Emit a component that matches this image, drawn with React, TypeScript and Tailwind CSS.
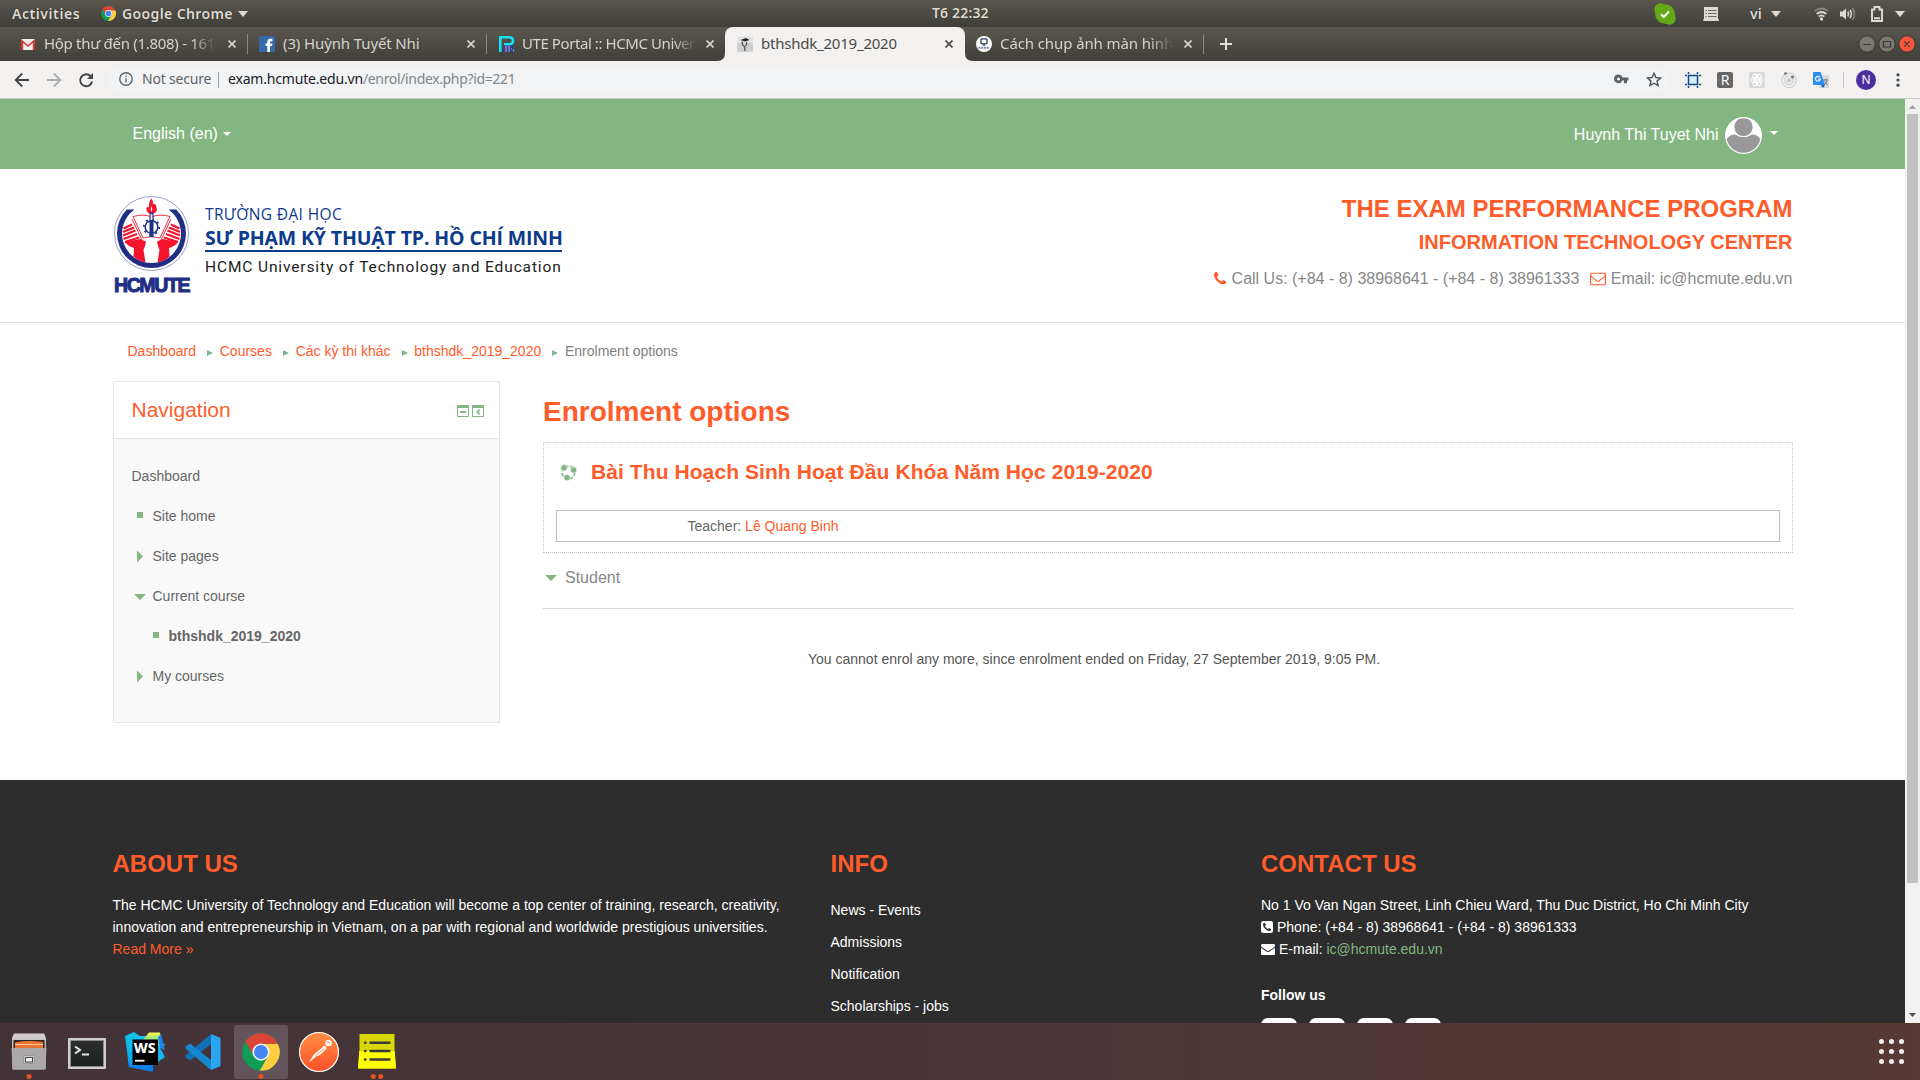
import React from "react";

type P = { children?: React.ReactNode; className?: string };

const PHONE =
  "M1408 1240q0 27-10 70.5t-21 68.5q-21 50-122 106-94 51-186 51-27 0-52.5-3.5t-57.5-12.5-47.5-14.5-55.5-20.5-49-18q-98-35-175-83-128-79-264.5-215.5t-215.5-264.5q-48-77-83-175-3-9-18-49t-20.5-55.5-14.5-47.5-12.5-57.5-3.5-52.5q0-92 51-186 56-101 106-122 25-11 68.5-21t70.5-10q14 0 21 3 18 6 53 76 11 19 30 54t35 63.5 31 53.5q3 4 17.5 25t21.5 35.5 7 28.5q0 20-28.5 50t-62 55-62 53-28.5 46q0 9 5 22.5t8.5 20.5 14 24 11.5 19q76 137 174 235t235 174q2 1 19 11.5t24 14 20.5 8.5 22.5 5q18 0 46-28.5t53-62 55-62 50-28.5q14 0 28.5 7t35.5 21.5 25 17.5q25 15 53.5 31t63.5 35 54 30q70 35 76 53 3 7 3 21z";
const ENVELOPE_O =
  "M1664 1504v-768q-32 36-69 66-268 206-426 338-51 43-83 67t-86.5 48.5-102.5 24.5h-2q-48 0-102.5-24.5t-86.5-48.5-83-67q-158-132-426-338-37-30-69-66v768q0 13 9.5 22.5t22.5 9.5h1472q13 0 22.5-9.5t9.5-22.5zm0-1051v-24.5l-.5-13-3-12.5-5.5-9-9-7.5-14-2.5h-1472q-13 0-22.5 9.5t-9.5 22.5q0 168 147 284 193 152 401 317 6 5 35 29.5t46 37.5 44.5 31.5 50.5 27.5 43 9h2q20 0 43-9t50.5-27.5 44.5-31.5 46-37.5 35-29.5q208-165 401-317 54-43 100.5-115.5t46.5-131.5zm128-37v1088q0 66-47 113t-113 47h-1472q-66 0-113-47t-47-113v-1088q0-66 47-113t113-47h1472q66 0 113 47t47 113z";
const ENVELOPE =
  "M1792 710v794q0 66-47 113t-113 47h-1472q-66 0-113-47t-47-113v-794q44 49 101 87 362 246 497 345 57 42 92.5 65.5t94.5 48 110 24.5h2q51 0 110-24.5t94.5-48 92.5-65.5q170-123 498-345 57-39 100-87zm0-294q0 79-49 151t-122 123q-376 261-468 325-10 7-42.5 30.5t-54 38-52 32.5-57.5 27-50 9h-2q-23 0-50-9t-57.5-27-52-32.5-54-38-42.5-30.5q-91-64-262-182.5t-205-142.5q-62-42-117-115.5t-55-136.5q0-78 41.5-130t118.5-52h1472q65 0 112.5 47t47.5 113z";

function Chrome({ className }: P) {
  return (
    <svg viewBox="-50 -50 100 100" className={className}>
      <circle r="50" fill="#109d58" />
      <path d="M0-22H44.9A50 50 0 0 1-3.4 49.9L19 11Z" fill="#ffcd40" />
      <path d="M0 0V-22H44.9A50 50 0 0 0-41.5-27.9L-19 11Z" fill="#db4437" />
      <circle r="23" fill="#f1f1f1" />
      <circle r="18.5" fill="#4285f4" />
    </svg>
  );
}

function Caret({ className }: P) {
  return (
    <svg viewBox="0 0 10 6" className={className} fill="currentColor" preserveAspectRatio="none">
      <path d="M0 0H10L5 6Z" />
    </svg>
  );
}

function TopBar() {
  return (
    <div className="flex h-[27px] items-center bg-linear-to-b from-[#5a564e] to-[#3f3e39] text-[#dfdbd2] text-[14px] font-semibold leading-[26px] [text-shadow:0_0_1px_#222]">
      <div className="flex w-[932px] items-center pl-3">
        <span className="w-[89px] tracking-[0.57px]">Activities</span>
        <Chrome className="h-[15px] w-[15px]" />
        <span className="ml-[6px] w-[116px] whitespace-nowrap tracking-[0.38px]">Google Chrome</span>
        <Caret className="h-[6px] w-[10px]" />
      </div>
      <span className="-mt-px w-[722px] tracking-[0.15px]">T6 22:32</span>
      <svg className="h-[22px] w-[22px]" viewBox="0 0 22 22">
        <circle cx="11" cy="11" r="9.8" fill="#62a915" />
        <circle cx="6.5" cy="6.5" r="6.2" fill="#62a915" />
        <circle cx="15.5" cy="15.5" r="6.2" fill="#62a915" />
        <path d="M7 11.3l2.8 2.7 5.2-5.6" fill="none" stroke="#fff" strokeWidth="2" />
      </svg>
      <svg className="ml-[27px] h-[14px] w-[16px]" viewBox="0 0 16 14">
        <path d="M1 0H15V11L16 14H0L1 11Z" fill="#dfdbd2" />
        <path d="M2.5 3.5h1.3M5 3.5h8.5M2.5 6.5h1.3M5 6.5h8.5M2.5 9.5h1.3M5 9.5h8.5" stroke="#6b6963" strokeWidth="1" />
      </svg>
      <span className="ml-[31px] w-[21px]">vi</span>
      <Caret className="h-[6px] w-[10px]" />
      <svg className="ml-[33px] h-[14px] w-[15px]" viewBox="0 0 15 14" fill="none" stroke="#dfdbd2" strokeWidth="1.7">
        <path d="M.8 4.2Q7.500-1.200 14.200 4.200" opacity=".4" />
        <path d="M2.700 7Q7.500 3 12.300 7" />
        <path d="M4.700 9.700Q7.500 7.200 10.300 9.700" />
        <circle cx="7.500" cy="12" r="1.700" fill="#dfdbd2" stroke="none" />
      </svg>
      <svg className="ml-[11px] h-[14px] w-[16px]" viewBox="0 0 16 14" fill="none" stroke="#dfdbd2" strokeWidth="1.5">
        <path d="M0 4.500H2.500L6 1.500V12.500L2.500 9.500H0Z" fill="#dfdbd2" stroke="none" />
        <path d="M7.800 4.500Q9.300 7 7.800 9.500M10 2.800Q12.700 7 10 11.200" />
        <path d="M12.400 1Q16.400 7 12.400 13" opacity=".4" />
      </svg>
      <svg className="ml-[15px] h-[16px] w-[12px]" viewBox="0 0 12 16" fill="none" stroke="#dfdbd2" strokeWidth="1.900">
        <path d="M1 3.500H3.500V1H8.500V3.500H11V15H1Z" />
        <path d="M3 12.300H9" strokeWidth="2" />
      </svg>
      <Caret className="ml-[12px] h-[6px] w-[10px]" />
    </div>
  );
}

function Close({ className }: P) {
  return (
    <svg viewBox="0 0 8 8" className={"h-2 w-2 shrink-0 " + (className ?? "")} stroke="currentColor" strokeWidth="1.7">
      <path d="M.5.5l7 7M7.500.5l-7 7" />
    </svg>
  );
}

const fade = "-mt-[2px] overflow-hidden whitespace-nowrap [mask-image:linear-gradient(90deg,#000_calc(100%-24px),transparent)]";

function TabBar() {
  return (
    <div className="flex h-[34px] items-center bg-linear-to-b from-[#5b574f] to-[#403f3a] text-[15px] leading-[34px] text-[#d6d3cb]">
      <div className="flex w-[248px] items-center pl-[21px]">
        <svg className="mt-[1px] h-[11px] w-[14px]" viewBox="0 0 14 11">
          <rect width="14" height="11" rx="1" fill="#eee" />
          <path d="M0 11V0L7 6 14 0V11H11.800V4L7 8 2.200 4V11Z" fill="#d93a34" />
        </svg>
        <span className={"ml-[9px] w-[172px] tracking-[-0.3px] " + fade}>Hộp thư đến (1.808) - 161</span>
        <Close className="ml-3" />
        <i className="ml-[10.500px] h-5 w-px bg-[#8b8881]" />
      </div>
      <div className="flex w-[239px] items-center pl-[11px]">
        <svg className="h-4 w-4" viewBox="0 0 16 16">
          <rect width="16" height="16" rx="1" fill="#3568ad" />
          <path d="M8.300 16V10H6.600V7.500H8.300V6Q8.300 2.800 11.300 2.800H13.400V5.200H12Q11 5.200 11 6.200V7.500H13.400L13.100 10H11V16Z" fill="#fff" />
        </svg>
        <span className="-mt-[2px] ml-[8px] w-[184px] whitespace-nowrap tracking-[-0.12px]">(3) Huỳnh Tuyết Nhi</span>
        <Close />
        <i className="ml-[11px] h-5 w-px bg-[#8b8881]" />
      </div>
      <div className="flex w-[238px] items-center pl-[12px]">
        <svg className="h-4 w-4" viewBox="0 0 16 16" fill="none">
          <path d="M1.300 16V1.300H10Q14 1.300 14 4.800T10 8.200H5M8 8.500L14.500 15.500" stroke="#13e4f5" strokeWidth="2.600" />
          <rect x="4.500" y="9.500" width="9.500" height="6.500" fill="#3b3d92" />
          <path d="M6 11h6M6 13h7M6 15h6" stroke="#c8c9ee" strokeWidth=".8" strokeDasharray="2 1" />
        </svg>
        <span className={"ml-[7px] w-[175px] tracking-[-0.42px] " + fade}>UTE Portal :: HCMC Univer</span>
        <Close className="ml-[9px]" />
      </div>
      <div className="relative flex h-full w-[240px] items-center rounded-t-[8px] bg-[#f2f1f0] pl-[12px] text-[#4c4a46]">
        <svg className="absolute bottom-0 -left-2 h-2 w-2" viewBox="0 0 8 8"><path d="M8 0V8H0Q8 8 8 0Z" fill="#f2f1f0" /></svg>
        <svg className="absolute bottom-0 -right-2 h-2 w-2" viewBox="0 0 8 8"><path d="M0 0V8H8Q0 8 0 0Z" fill="#f2f1f0" /></svg>
        <svg className="h-4 w-4" viewBox="0 0 16 16">
          <rect width="16" height="16" rx="1" fill="#cfcfcf" />
          <rect width="16" height="7" fill="#e4e4e4" />
          <path d="M3.500 4L9 2 12.500 4 8 5.500Z" fill="#222" />
          <path d="M5.500 5.500Q4.500 9 7.500 10.500L8 15M9.500 6Q10.500 8 8.500 10" fill="none" stroke="#555" strokeWidth="1.300" />
        </svg>
        <span className="-mt-[2px] ml-[8px] w-[184px] tracking-[-0.22px]">bthshdk_2019_2020</span>
        <Close />
      </div>
      <div className="flex w-[239px] items-center pl-[11px]">
        <svg className="h-4 w-4" viewBox="0 0 16 16">
          <circle cx="8" cy="8" r="8" fill="#fff" />
          <rect x="5" y="2.800" width="6" height="5" rx=".8" fill="none" stroke="#2c3a58" strokeWidth="1.300" />
          <path d="M7 9h2" stroke="#2c3a58" strokeWidth="1.500" />
          <path d="M2.500 11.800h11" stroke="#7c86b0" strokeWidth="2" strokeDasharray="2 .7" />
        </svg>
        <span className={"ml-[8px] w-[173px] tracking-[-0.1px] " + fade}>Cách chụp ảnh màn hình</span>
        <Close className="ml-[11px]" />
        <i className="ml-[11px] h-5 w-px bg-[#8b8881]" />
      </div>
      <svg className="ml-[16px] h-3 w-3" viewBox="0 0 12 12" stroke="#e2dfd8" strokeWidth="2"><path d="M6 0V12M0 6H12" /></svg>
      <svg className="ml-auto mr-[3px] h-[20px] w-[60px]" viewBox="0 0 60 20" fill="none">
        <g stroke="#35342f" strokeWidth="1">
          <circle cx="10" cy="10" r="8.200" fill="#7a7871" />
          <circle cx="30" cy="10" r="8.200" fill="#7a7871" />
          <circle cx="50" cy="10" r="8.200" fill="#f4573c" />
        </g>
        <path d="M6 10.500h8M26.500 7.500h7v5.500h-7zM47.300 7.300l5.400 5.400M52.700 7.300l-5.400 5.400" stroke="#3a3934" strokeWidth="1.200" />
      </svg>
    </div>
  );
}

function Toolbar() {
  return (
    <div className="flex h-[38px] items-center border-b border-[#c8c8c8] bg-[#f2f1f0] text-[14px]">
      <svg className="ml-[14px] h-[16px] w-[80px]" viewBox="0 0 80 16" fill="none" strokeWidth="1.900">
        <path d="M15 8H2M8.200 1.500L1.700 8l6.500 6.500" stroke="#454545" />
        <path d="M33 8H46M39.800 1.500L46.300 8l-6.500 6.500" stroke="#adadad" />
        <path d="M76.500 4A6 6 0 1 0 78.100 9.500" stroke="#454545" />
        <path d="M79 1V7H73Z" fill="#454545" />
      </svg>
      <div className="ml-[14px] flex h-[28px] w-[1563px] items-center rounded-full bg-[#f1f3f5] leading-[26px] text-[#5f6368]">
        <svg className="-mt-px ml-[11px] h-[14px] w-[14px]" viewBox="0 0 14 14" fill="none" stroke="#5f6368" strokeWidth="1.400">
          <circle cx="7" cy="7" r="6.200" /><path d="M7 6.300V10.300M7 3.500V5" />
        </svg>
        <span className="-mt-[2px] ml-[9px] w-[76px] whitespace-nowrap tracking-[-0.2px]">Not secure</span>
        <i className="h-4 w-px bg-[#999]" />
        <span className="-mt-[2px] ml-[9px] whitespace-nowrap tracking-[-0.35px] text-[#80868b]"><span className="tracking-[-0.18px] text-[#202124]">exam.hcmute.edu.vn</span>/enrol/index.php?id=221</span>
        <svg className="-mt-[2px] ml-auto h-[10px] w-[15px]" viewBox="0 0 15 10">
          <path d="M4.500.5A4.300 4.300 0 1 0 8.300 6.500H10V9.300H13V6.500H14.500V3.500H8.500A4.300 4.300 0 0 0 4.500.5ZM4.500 3.400A1.500 1.500 0 1 1 4.490 3.400Z" fill="#5f6368" fillRule="evenodd" />
        </svg>
        <svg className="-mt-px ml-[16.500px] mr-[9.500px] h-[15px] w-[16px]" viewBox="0 0 16 15" fill="none" stroke="#4f5357" strokeWidth="1.400">
          <path d="M8 1.300L9.900 5.500 14.600 6 11 9.100 12.100 13.600 8 11.200 3.900 13.600 5 9.100 1.400 6 6.100 5.500Z" />
        </svg>
      </div>
      <svg className="ml-[14px] h-[16px] w-[16px]" viewBox="0 0 16 16" fill="#d8ebf8" stroke="#174a85">
        <rect x="4" y="4" width="8" height="8" stroke="none" />
        <path d="M3.500 3.500H12.500V12.500H3.500Z" fill="none" strokeWidth="1.500" />
        <path d="M3.500 0V2M12.500 0V2M3.500 14V16M12.500 14V16M0 3.500H2M0 12.500H2M14 3.500H16M14 12.500H16" strokeWidth="1.500" />
      </svg>
      <div className="ml-[16px] flex h-4 w-4 items-center justify-center rounded-[2px] bg-[#666] text-[14px] leading-4 text-white">R</div>
      <svg className="ml-[16px] h-4 w-4" viewBox="0 0 16 16" fill="none" stroke="#fff" strokeWidth="1">
        <rect width="16" height="16" rx="1" fill="#d9d9d9" stroke="none" />
        <ellipse cx="8" cy="8" rx="6.500" ry="2.600" /><ellipse cx="8" cy="8" rx="6.500" ry="2.600" transform="rotate(60 8 8)" /><ellipse cx="8" cy="8" rx="6.500" ry="2.600" transform="rotate(120 8 8)" />
        <circle cx="8" cy="8" r="1.200" fill="#fff" />
      </svg>
      <svg className="ml-[16px] h-4 w-4" viewBox="0 0 16 16" fill="none" stroke="#d0d0d0" strokeWidth="1.200">
        <circle cx="8" cy="8.300" r="7.200" /><circle cx="8" cy="8.300" r="4.300" /><circle cx="8" cy="8.300" r="1.800" fill="#ccc" />
        <circle cx="4.500" cy="1.600" r="1.500" fill="#888" stroke="none" /><circle cx="11.500" cy="5" r="1.600" fill="#777" stroke="none" />
      </svg>
      <svg className="ml-[16px] h-4 w-4" viewBox="0 0 16 16">
        <rect x="6" y="3" width="10" height="13" rx="1" fill="#d8d8d8" />
        <path d="M8 13H12L10 16Z" fill="#1a5fc0" />
        <path d="M1 0H7.500L12 13H1Q0 13 0 12V1Q0 0 1 0Z" fill="#2a8df2" />
        <path d="M6.800 5.300A2.400 2.400 0 1 0 7.300 7H5" fill="none" stroke="#fff" strokeWidth="1.100" />
        <path d="M10.300 8H15M12.600 6.800V8M14 8.500Q13.500 11 11.500 12.500M11.500 9.500L14.500 13" fill="none" stroke="#6b7680" strokeWidth="1" />
      </svg>
      <i className="ml-[14px] h-4 w-px bg-[#c5c5c5]" />
      <div className="ml-[12px] flex h-5 w-5 items-center justify-center rounded-full bg-[#4a2ea0] text-[12px] leading-5 text-white">N</div>
      <svg className="ml-[20px] h-[14px] w-[4px]" viewBox="0 0 4 14" fill="#454545"><circle cx="2" cy="1.800" r="1.600" /><circle cx="2" cy="7" r="1.600" /><circle cx="2" cy="12.200" r="1.600" /></svg>
    </div>
  );
}

function Emblem() {
  return (
    <svg className="h-[75px] w-[75px]" viewBox="0 0 75 75">
      <circle cx="37.500" cy="37.500" r="37" fill="#fff" stroke="#7d85bd" strokeWidth=".8" />
      <path d="M12.700 13.500A34.500 34.500 0 1 0 62.300 13.500H54.500A29.500 29.500 0 1 1 20.500 13.500Z" fill="#1f2f86" />
      <path d="M37.500 2.500Q40 6 38.500 8Q42 7 42.500 12Q44 15 40 17.500H35.500Q31 15 33 10.500Q34 12 35 11Q34.500 6 37.500 2.500Z" fill="#f5142e" />
      <path d="M37.500 10Q39 13 37.500 16Q36 13 37.500 10Z" fill="#fff" />
      <path d="M37.500 21Q30 17.500 19 20.500L29 42Q37.500 39 46 42L56 20.500Q45 17.500 37.500 21ZM18 23L28 44M57 23L47 44" fill="none" stroke="#f5142e" strokeWidth=".9" />
      <circle cx="37.500" cy="31" r="6.300" fill="none" stroke="#1f2f86" strokeWidth="1.500" />
      <circle cx="37.500" cy="31" r="7.700" fill="none" stroke="#1f2f86" strokeWidth="1.800" strokeDasharray="2 4.050" />
      <path d="M35.500 16.500H39.500V41H35.500Z" fill="#1f2f86" />
      <path d="M36.600 18H38.400V24H36.600Z" fill="#dfe3f5" />
      <path d="M9.500 32.500L18 28.500M9 36L20 31.500M9 39.500L21.500 34.500M9.500 43L23 38M11 46L25 41.500M65.500 32.500L57 28.500M66 36L55 31.500M66 39.500L53.500 34.500M65.500 43L52 38M64 46L50 41.500" stroke="#f5142e" strokeWidth="2.300" />
      <path d="M11 46L26 43L32 45.500L31 50L29.500 54L31.500 66.500Q24 65 19.500 60.500L20 52Q14 50.500 11 46Z" fill="#f5142e" />
      <path d="M64 46L49 43L43 45.500L44 50L45.500 54L43.500 66.500Q51 65 55.500 60.500L55 52Q61 50.500 64 46Z" fill="#f5142e" />
    </svg>
  );
}

function SiteHeader() {
  return (
    <>
      <div className="flex h-[70px] items-center bg-[#84b682] pl-[132.500px] pr-[127px] text-[16px] leading-[24px] text-white">
        <span className="mr-[5px]">English (en)</span>
        <Caret className="h-[4px] w-[8px]" />
        <span className="mt-px ml-auto mr-[6.500px]">Huynh Thi Tuyet Nhi</span>
        <svg className="mt-[2px] h-[37px] w-[37px]" viewBox="0 0 37 37">
          <defs><clipPath id="av"><circle cx="18.500" cy="18.500" r="17.300" /></clipPath></defs>
          <circle cx="18.500" cy="18.500" r="18.500" fill="#fff" />
          <g clipPath="url(#av)" fill="#999">
            <path d="M1 24Q3.500 17 10 17.500Q18.500 22.500 27 17.500Q33.500 17 36 24V37H1Z" />
            <circle cx="18.500" cy="10" r="9.700" stroke="#fff" strokeWidth="1" />
          </g>
        </svg>
        <Caret className="-mt-[3px] ml-[8px] h-[4px] w-[8px]" />
      </div>
      <div className="flex h-[154px] border-b border-[#e6dfe0] px-[112.500px]">
        <div className="w-[78px] pt-[27px] pl-[1.500px]">
          <Emblem />
          <div className="mt-[3px] text-[19.500px] leading-[22px] font-bold tracking-[-1.400px] text-[#1f2f86] [-webkit-text-stroke:1px_#1f2f86]">HCMUTE</div>
        </div>
        <div className="ml-[14.500px] w-[357px] whitespace-nowrap pt-[33px] text-[#0d3b8c]">
          <div className="font-['Open_Sans'] text-[15.500px] leading-[24px] tracking-[0.38px]">TRƯỜNG ĐẠI HỌC</div>
          <div className="h-[26px] border-b-2 border-[#0d3b8c] font-['Open_Sans'] text-[19.500px] leading-[24px] font-bold tracking-[-0.140px]">SƯ PHẠM KỸ THUẬT TP. HỒ CHÍ MINH</div>
          <div className="mt-[4px] font-['Roboto'] text-[15.500px] leading-[22px] tracking-[0.870px] text-[#222]">HCMC University of Technology and Education</div>
        </div>
        <div className="ml-auto flex flex-col items-end pt-[24px] text-[#888]">
          <div className="text-[24px] leading-[32px] font-bold text-[#ff5c2b]">THE EXAM PERFORMANCE PROGRAM</div>
          <div className="mt-[1px] text-[20px] leading-[32px] font-bold text-[#ff5c2b]">INFORMATION TECHNOLOGY CENTER</div>
          <div className="mt-[9px] flex items-center text-[16px] leading-[24px] whitespace-nowrap">
            <svg className="-mt-[2px] h-[12.500px] w-[12.500px]" viewBox="0 128 1408 1408" fill="#ff5c2b"><path d={PHONE} /></svg>
            <span className="ml-[5.500px]">Call Us: (+84 - 8) 38968641 - (+84 - 8) 38961333</span>
            <svg className="ml-[10.500px] h-[16px] w-[16px]" viewBox="0 64 1792 1792" fill="#ff5c2b"><path d={ENVELOPE_O} /></svg>
            <span className="ml-[5px]">Email: ic@hcmute.edu.vn</span>
          </div>
        </div>
      </div>
    </>
  );
}

function Crumbs() {
  const items = ["Dashboard", "Courses", "Các kỳ thi khác", "bthshdk_2019_2020"];
  return (
    <div className="flex h-[58px] items-center pb-[2px] pl-[127.500px] text-[14px] leading-[22px] text-[#ff5c2b]">
      {items.map((t) => (
        <React.Fragment key={t}>
          <span>{t}</span>
          <svg className="mt-[4px] ml-[11px] mr-[6.750px] h-[6px] w-[6px]" viewBox="0 0 6 6"><path d="M0 0L6 3 0 6Z" fill="#7db491" /></svg>
        </React.Fragment>
      ))}
      <span className="text-[#808080]">Enrolment options</span>
    </div>
  );
}

type Mark = "square" | "right" | "down";

function Marker({ kind }: { kind: Mark }) {
  return (
    <svg className="mr-[7px] h-[12px] w-[12px] shrink-0" viewBox="0 0 12 12" fill="#84b682">
      {kind === "square" && <rect x="3" y="2" width="6" height="6" />}
      {kind === "right" && <path d="M3 0.500L9 6.500 3 12.500Z" />}
      {kind === "down" && <path d="M0 4H12L6 10Z" />}
    </svg>
  );
}

function NavBlock() {
  return (
    <div className="h-[342px] w-[387px] border border-[#e6e6e6] bg-[#f9f9f9] text-[14px] text-[#666]">
      <div className="flex h-[57px] items-center border-b border-[#e6e6e6] bg-white pl-[18px] pr-[15px]">
        <span className="text-[21px] leading-[30px] text-[#ff5c2b]">Navigation</span>
        <svg className="ml-auto mt-[1px] h-[12px] w-[27px]" viewBox="0 0 27 12" fill="none" stroke="#84b682">
          <path d="M.5.5h11v11H.5zM15.500.5h11v11h-11z" />
          <path d="M0 1.500H12M15 1.500H27" strokeWidth="3" />
          <path d="M3 7H9M22.500 4.500L20.500 7L22.500 9.500" strokeWidth="2" />
        </svg>
      </div>
      <div className="pt-[17px] pl-[18px] leading-[40px]">
        <div>Dashboard</div>
        <div className="flex items-center pl-[2px]"><Marker kind="square" />Site home</div>
        <div className="flex items-center pl-[2px]"><Marker kind="right" />Site pages</div>
        <div className="flex items-center pl-[2px]"><Marker kind="down" />Current course</div>
        <div className="flex items-center pl-[18px] font-bold"><Marker kind="square" />bthshdk_2019_2020</div>
        <div className="flex items-center pl-[2px]"><Marker kind="right" />My courses</div>
      </div>
    </div>
  );
}

function MainColumn() {
  return (
    <div className="ml-[43.500px] flex-1 text-[14px] text-[#666]">
      <h1 className="pt-[11px] text-[28px] leading-[40px] font-bold text-[#ff5c2b]">Enrolment options</h1>
      <div className="mt-[10px] h-[111px] border border-dotted border-[#c4c4c4] px-[12px]">
        <div className="flex h-[67px] items-start pt-[15px] pl-[4px]">
          <svg className="mt-[6px] h-[17px] w-[17px]" viewBox="0 0 17 17">
            <circle cx="8.500" cy="8.500" r="6.300" fill="none" stroke="#84b682" strokeWidth="1.700" strokeDasharray="3.500 1.600" />
            <g fill="#84b682" stroke="#fff" strokeWidth=".6"><circle cx="4" cy="3.800" r="3.200" /><circle cx="13.600" cy="6" r="3.200" /><circle cx="7" cy="13.600" r="3.200" /></g>
          </svg>
          <span className="ml-[14px] text-[21px] leading-[28px] font-bold tracking-[0.080px] whitespace-nowrap text-[#ff5c2b]">Bài Thu Hoạch Sinh Hoạt Đầu Khóa Năm Học 2019-2020</span>
        </div>
        <div className="h-[32px] border border-[#bfbfbf] pl-[130.500px] leading-[31px]">Teacher: <span className="text-[#ff5c2b]">Lê Quang Binh</span></div>
      </div>
      <div className="flex h-[56px] border-b border-[#d6d6d6] pt-[13px] pl-[2px] text-[16px] leading-[24px] text-[#888]">
        <svg className="mt-[5px] mr-[8px] h-[12px] w-[12px]" viewBox="0 0 12 12" fill="#84b682"><path d="M0 4H12L6 10Z" /></svg>
        Student
      </div>
      <div className="mt-[39px] pl-[265px] leading-[22px] text-[#555]">You cannot enrol any more, since enrolment ended on Friday, 27 September 2019, 9:05 PM.</div>
    </div>
  );
}

function Footer() {
  const h = "text-[24px] leading-[32px] font-bold text-[#ff5c2b]";
  return (
    <div className="flex h-[243px] overflow-hidden bg-[#2d2d2d] pt-[68px] pl-[112.500px] text-[14px] leading-[22px] whitespace-nowrap text-white">
      <div className="w-[718px]">
        <div className={h}>ABOUT US</div>
        <div className="mt-[14px]">The HCMC University of Technology and Education will become a top center of training, research, creativity,</div>
        <div>innovation and entrepreneurship in Vietnam, on a par with regional and worldwide prestigious universities.</div>
        <div className="text-[#ff5c2b]">Read More »</div>
      </div>
      <div className="w-[430.500px]">
        <div className={h}>INFO</div>
        <div className="mt-[14px] leading-[32px]">
          <div>News - Events</div>
          <div>Admissions</div>
          <div>Notification</div>
          <div>Scholarships - jobs</div>
        </div>
      </div>
      <div>
        <div className={h}>CONTACT US</div>
        <div className="mt-[14px]">No 1 Vo Van Ngan Street, Linh Chieu Ward, Thu Duc District, Ho Chi Minh City</div>
        <div className="flex items-center">
          <svg className="mr-[4px] h-[12px] w-[12px]" viewBox="0 0 12 12"><rect width="12" height="12" rx="2.200" fill="#fff" /><path d={PHONE} transform="translate(2 1.200) scale(.0057)" fill="#2d2d2d" /></svg>
          Phone: (+84 - 8) 38968641 - (+84 - 8) 38961333
        </div>
        <div className="flex items-center">
          <svg className="mr-[4px] h-[14px] w-[14px]" viewBox="0 0 1792 1792" fill="#fff"><path d={ENVELOPE} /></svg>
          <span>E-mail: <span className="text-[#84b682]">ic@hcmute.edu.vn</span></span>
        </div>
        <div className="mt-[24px] font-bold">Follow us</div>
        <div className="mt-[12px] flex gap-[12px]">
          {[0, 1, 2, 3].map((i) => <div key={i} className="h-9 w-9 rounded-[7px] bg-white" />)}
        </div>
      </div>
    </div>
  );
}

function Dock() {
  return (
    <div className="flex h-[57px] items-center bg-linear-to-r from-[#433338] via-[#4b3439] to-[#563a33]">
      <svg className="h-[57px] w-[410px]" viewBox="0 1023 410 57">
        <defs>
          <linearGradient id="cab" x2="0" y2="1"><stop stopColor="#d5d1d1" /><stop offset="1" stopColor="#8f8f8f" /></linearGradient>
          <linearGradient id="pm" x2="0" y2="1"><stop stopColor="#ff9044" /><stop offset="1" stopColor="#ff4f28" /></linearGradient>
          <linearGradient id="ws" x2="0" y2="1"><stop stopColor="#11c6e6" /><stop offset="1" stopColor="#0a9cf2" /></linearGradient>
          <linearGradient id="wy" x2="0" y2="1"><stop stopColor="#fcf84a" /><stop offset=".5" stopColor="#20c8d8" /></linearGradient>
          <linearGradient id="tm" x2="0" y2="1"><stop stopColor="#2c2e2e" /><stop offset="1" stopColor="#1f2121" /></linearGradient>
        </defs>
        <path d="M14 1033.500H44L46 1038V1068Q46 1070 44 1070H14Q12 1070 12 1068V1038Z" fill="url(#cab)" />
        <path d="M13.500 1040H44.500V1048H13.500Z" fill="#33261f" />
        <path d="M15 1042.500Q28 1040 43 1042V1048H15Z" fill="#e87532" />
        <path d="M15 1044.500H43" stroke="#f9c69b" strokeWidth="1" />
        <path d="M11.500 1048H46.500L45.500 1069H12.500Z" fill="#aaa8a8" />
        <rect x="23.500" y="1055.500" width="11" height="8" rx="1" fill="#c9c9c9" stroke="#999" />
        <rect x="25.500" y="1057.500" width="7" height="4.500" fill="#eee" stroke="#444" />

        <rect x="68" y="1038" width="38" height="31" rx="1" fill="#cfcfcf" />
        <rect x="70" y="1040" width="34" height="27" fill="#8c8c8c" />
        <rect x="71" y="1041" width="32" height="25" fill="url(#tm)" />
        <path d="M75 1046.500L80 1050L75 1053.500M82 1054.500H89" fill="none" stroke="#e6e6e6" strokeWidth="2" />

        <path d="M125 1036L134 1032L140 1036L146 1036L154 1034L160 1053L152 1063V1071.500L129 1067Z" fill="url(#ws)" />
        <path d="M129 1062L133 1066L153 1063V1071.500L130 1067Z" fill="#0b7ef2" />
        <path d="M143 1040L149 1032.500H160L162 1042L165 1045L158 1050L158 1062L152 1060Z" fill="url(#wy)" />
        <path d="M158 1037L161 1034L165 1050L160 1048Z" fill="#1b86ee" />
        <path d="M158 1046L162 1051L165 1057L158 1062Z" fill="#18b4ee" />
        <rect x="132.500" y="1039.500" width="25.500" height="25.500" fill="#000" />
        <path d="M135 1060.700H144.500" stroke="#fff" strokeWidth="1.800" />
        <text x="133.800" y="1053" fontFamily="Noto Sans" fontWeight="800" fontSize="14" fill="#fff" textLength="22" lengthAdjust="spacingAndGlyphs">WS</text>

        <path d="M211 1034L220.500 1038V1066L211 1070Z" fill="#2aa5f2" />
        <path d="M211 1034V1044L190 1060.500L185.500 1057.500V1055.500Z" fill="#0f72b8" />
        <path d="M211 1070V1060L190 1043.500L185.500 1046.500V1048.500Z" fill="#1787d2" />

        <rect x="234" y="1025" width="54" height="54" rx="3" fill="#62545a" />
        <g transform="translate(261 1052) scale(.375)">
          <circle r="50" fill="#109d58" />
          <path d="M0-22H44.900A50 50 0 0 1-3.400 49.900L19 11Z" fill="#ffcd40" />
          <path d="M0 0V-22H44.900A50 50 0 0 0-41.500-27.900L-19 11Z" fill="#db4437" />
          <circle r="23" fill="#f1f1f1" />
          <circle r="18.500" fill="#4285f4" />
        </g>

        <circle cx="319" cy="1052" r="19.500" fill="url(#pm)" stroke="#fff" strokeWidth="1.200" />
        <circle cx="328.500" cy="1043" r="3.200" fill="#fff" />
        <path d="M324.500 1045.500L327 1048L320 1055L316 1056.500L308.500 1063L313.500 1055Z" fill="#fff" />
        <path d="M324 1048.500L315.500 1056M326 1053L323 1056" stroke="#ff7a45" strokeWidth=".9" />
        <path d="M326.500 1041.500L330 1043" stroke="#ff7a45" strokeWidth="1" />

        <path d="M359.500 1034H394.500V1051L396 1068.500H358L359.500 1051Z" fill="#d8d800" />
        <path d="M359.300 1051H394.700L396 1068.500H358Z" fill="#ffff00" />
        <path d="M365 1042.700h.5M370.500 1042.700h19M365 1051h.5M370.500 1051h19M365 1059.500h.5M370.500 1059.500h19" stroke="#393939" strokeWidth="2.400" strokeLinecap="round" />

        <g fill="#e95420"><circle cx="29" cy="1076.500" r="2.500" /><circle cx="261" cy="1076.500" r="2.500" /><circle cx="373.300" cy="1076.500" r="2.500" /><circle cx="380.700" cy="1076.500" r="2.500" /></g>
      </svg>
      <div className="mr-[16px] ml-auto grid grid-cols-3 gap-x-[4.500px] gap-y-[4.500px]">
        {[0, 1, 2, 3, 4, 5, 6, 7, 8].map((i) => <div key={i} className="h-[5.500px] w-[5.500px] rounded-full bg-[#f2eeee]" />)}
      </div>
    </div>
  );
}

export default function App() {
  return (
    <div className="h-[1080px] w-[1920px] overflow-hidden bg-white font-['Liberation_Sans',sans-serif]">
      <div className="font-['Noto_Sans',sans-serif]">
        <TopBar />
        <TabBar />
        <Toolbar />
      </div>
      <div className="flex h-[924px]">
        <div className="w-[1905px]">
          <SiteHeader />
          <Crumbs />
          <div className="flex h-[399px] pl-[112.500px] pr-[112px]">
            <NavBlock />
            <MainColumn />
          </div>
          <Footer />
        </div>
        <div className="flex w-[15px] flex-col items-center justify-between bg-[#f1f1f1]">
          <svg className="h-[15px] w-[15px] shrink-0" viewBox="0 0 15 15"><path d="M4 10L7.500 6 11 10Z" fill="#a3a3a3" /></svg>
          <div className="mb-auto h-[769px] w-[11px] bg-[#c1c1c1]" />
          <svg className="h-[15px] w-[15px] shrink-0" viewBox="0 0 15 15"><path d="M4 5L7.500 9 11 5Z" fill="#505050" /></svg>
        </div>
      </div>
      <Dock />
    </div>
  );
}
